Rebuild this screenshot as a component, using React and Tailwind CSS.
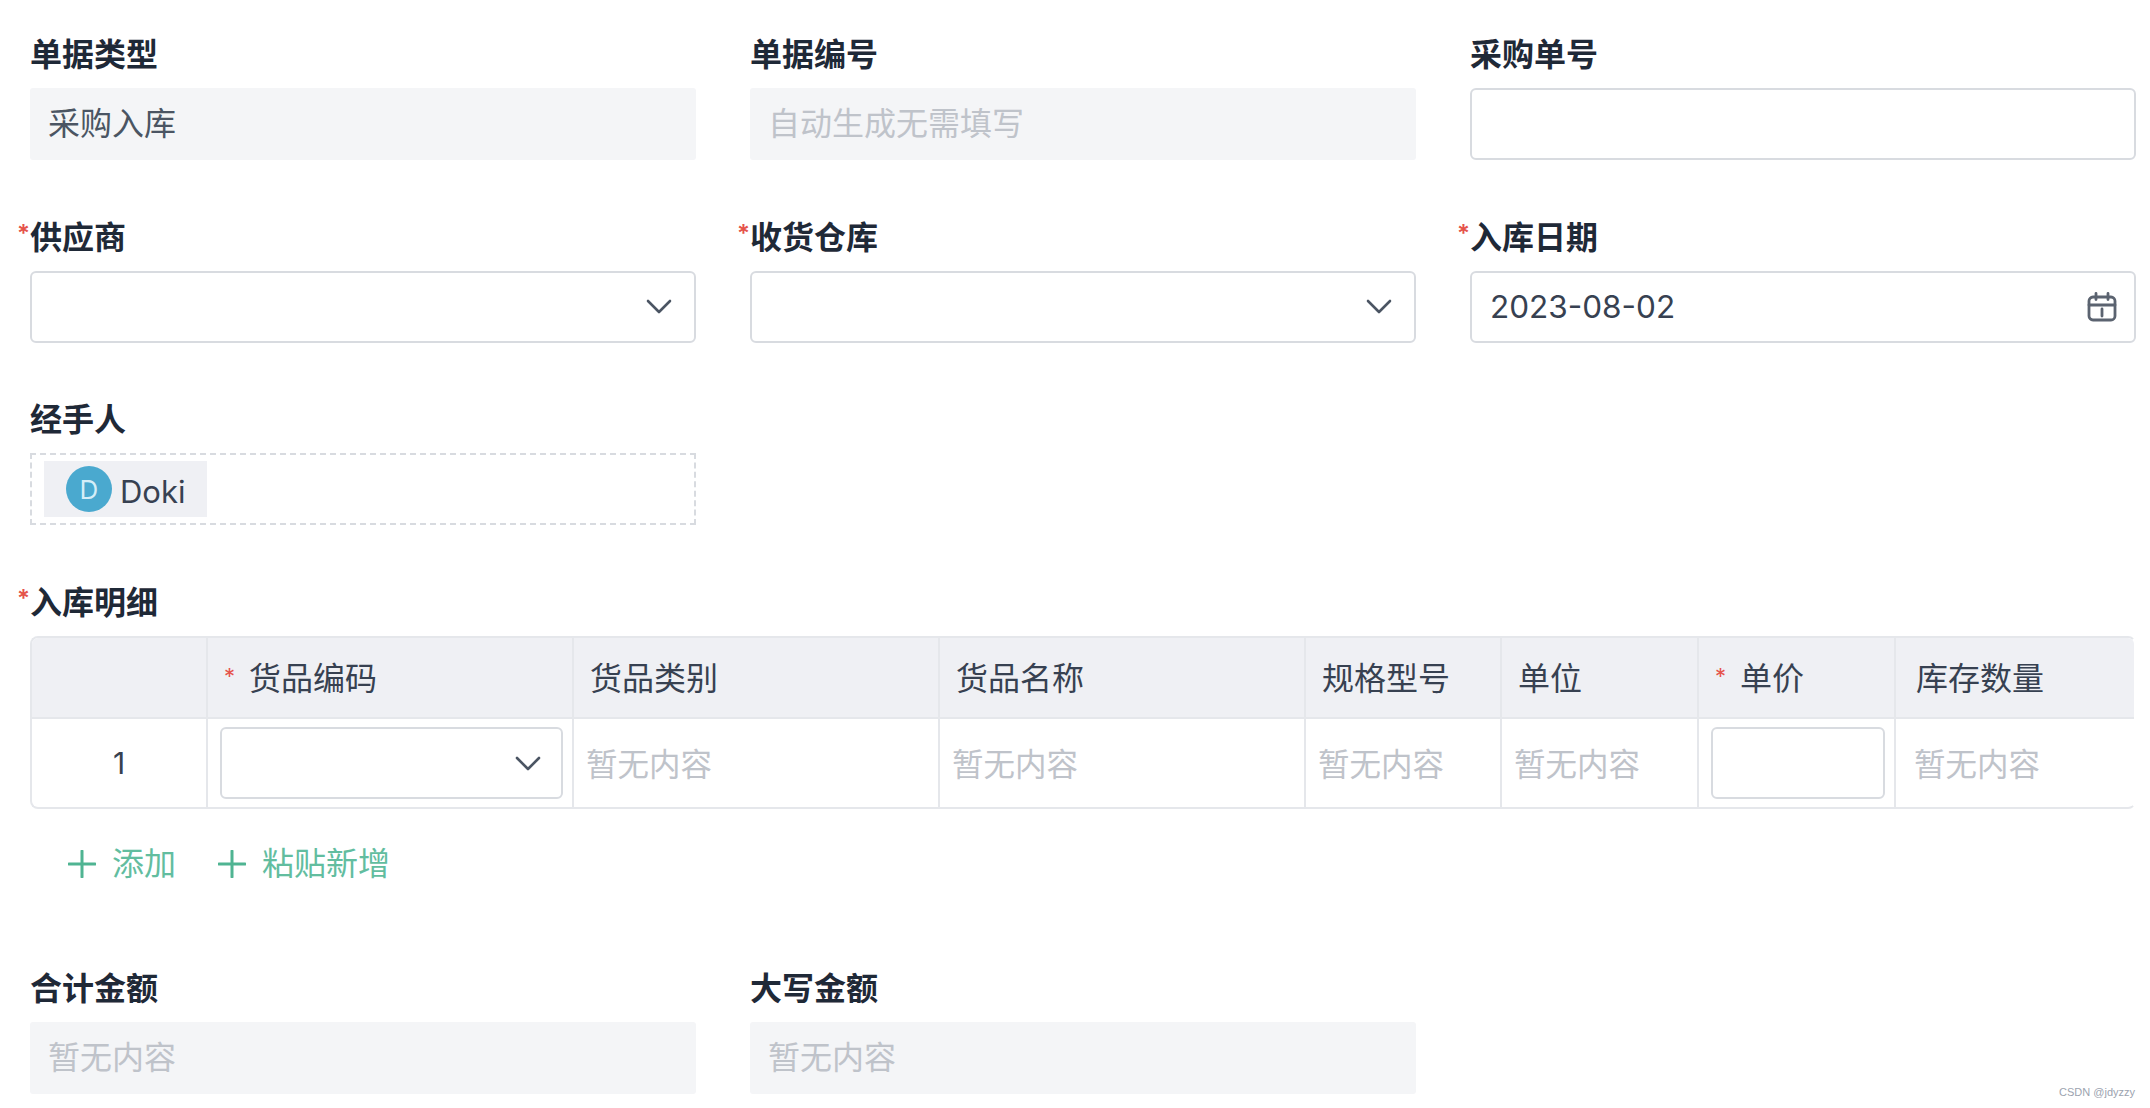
import React from 'react';

const font = 'font-["Inter","Noto_Sans_CJK_SC",sans-serif]';

function Chevron({ className }) {
  return (
    <svg className={className} viewBox="0 0 26 15" fill="none" stroke="#4b5563" strokeWidth="2.6" strokeLinecap="round" strokeLinejoin="round">
      <path d="M2 2l11 11L24 2" />
    </svg>
  );
}

function CalendarIcon() {
  return (
    <svg className="w-[30px] h-[30px]" viewBox="0 0 30 30" fill="none" stroke="#5b6370" strokeWidth="2.8" strokeLinecap="round">
      <rect x="2" y="5" width="26" height="23" rx="4" />
      <path d="M9 1.5v6M21 1.5v6M2 13h26M15 17v7" />
    </svg>
  );
}

function PlusIcon() {
  return (
    <svg className="w-[28px] h-[28px]" viewBox="0 0 28 28" fill="none" stroke="#4fb492" strokeWidth="3" strokeLinecap="round">
      <path d="M14 1v26M1 14h26" />
    </svg>
  );
}

function Label({ text, required }) {
  return (
    <div className="flex h-[44px] items-center mb-[11px] text-[32px] font-semibold text-[#1f2937]">
      {required && <span className="w-[13px] -ml-[13px] text-[24px] leading-none text-[#e5534b] -mt-[8px]">*</span>}
      {text}
    </div>
  );
}

function ReadOnly({ label, value, muted }) {
  return (
    <div>
      <Label text={label} />
      <div className={`h-[72px] rounded-[3px] bg-[#f4f5f7] px-[18px] flex items-center text-[32px] ${muted ? 'text-[#bfc3ca]' : 'text-[#4b5563]'}`}>
        {value}
      </div>
    </div>
  );
}

function Field({ label, required, children }) {
  return (
    <div>
      <Label text={label} required={required} />
      <div className="h-[72px] rounded-[6px] border-2 border-[#d8dbe0] bg-white pl-[18px] pr-[22px] flex items-center justify-between text-[31.5px] text-[#374151]">
        {children}
      </div>
    </div>
  );
}

const headers = [
  { text: '' },
  { text: '货品编码', required: true },
  { text: '货品类别' },
  { text: '货品名称' },
  { text: '规格型号' },
  { text: '单位' },
  { text: '单价', required: true },
  { text: '库存数量' },
];

const gridCols = 'grid grid-cols-[176px_366px_366px_366px_196px_197px_197px_1fr]';

function HeaderCell({ text, required, last }) {
  return (
    <div className={`flex items-center pt-[3px] text-[32px] text-[#374151] border-[#e5e7eb] ${last ? 'pl-[20px]' : 'pl-[16px] border-r-2'}`}>
      {required && <span className="w-[25px] text-[22px] leading-none text-[#e5534b] -mt-[6px]">*</span>}
      {text}
    </div>
  );
}

function EmptyCell({ last }) {
  return (
    <div className={`flex items-center pt-[3px] text-[31.5px] text-[#bfc3ca] border-[#e5e7eb] ${last ? 'pl-[18px]' : 'pl-[12px] border-r-2'}`}>
      暂无内容
    </div>
  );
}

function DetailTable() {
  return (
    <div className="rounded-[8px] border-2 border-[#e5e7eb] border-r-transparent overflow-hidden">
      <div className={`${gridCols} h-[81px] bg-[#eff0f4] border-b-2 border-[#e5e7eb]`}>
        {headers.map((h, i) => (
          <HeaderCell key={i} text={h.text} required={h.required} last={i === headers.length - 1} />
        ))}
      </div>
      <div className={`${gridCols} h-[88px]`}>
        <div className="flex items-center justify-center text-[30px] text-[#374151] border-r-2 border-[#e5e7eb]">1</div>
        <div className="flex items-center pl-[12px] pr-[9px] border-r-2 border-[#e5e7eb]">
          <div className="w-full h-[72px] rounded-[6px] border-2 border-[#d8dbe0] flex items-center justify-end pr-[20px]">
            <Chevron className="w-[26px] h-[15px]" />
          </div>
        </div>
        <EmptyCell />
        <EmptyCell />
        <EmptyCell />
        <EmptyCell />
        <div className="flex items-center pl-[12px] pr-[9px] border-r-2 border-[#e5e7eb]">
          <div className="w-full h-[72px] rounded-[6px] border-2 border-[#d8dbe0]" />
        </div>
        <EmptyCell last />
      </div>
    </div>
  );
}

export default function App() {
  return (
    <div className={`relative w-[2150px] h-[1108px] overflow-hidden bg-white pl-[30px] pr-[14px] pt-[33px] ${font}`}>
      <div className="grid grid-cols-3 gap-x-[54px] gap-y-[55.5px]">
        <ReadOnly label="单据类型" value="采购入库" />
        <ReadOnly label="单据编号" value="自动生成无需填写" muted />
        <Field label="采购单号" />

        <Field label="供应商" required>
          <span />
          <Chevron className="w-[26px] h-[15px]" />
        </Field>
        <Field label="收货仓库" required>
          <span />
          <Chevron className="w-[26px] h-[15px]" />
        </Field>
        <Field label="入库日期" required>
          <span>2023-08-02</span>
          <span className="-mr-[5px]"><CalendarIcon /></span>
        </Field>

        <div>
          <Label text="经手人" />
          <div className="h-[72px] border-2 border-dashed border-[#d8dbe0] flex items-center pl-[12px]">
            <div className="h-[56px] bg-[#eff0f4] flex items-center gap-[8px] px-[22px]">
              <div className="w-[46px] h-[46px] rounded-full bg-[#4aa9cf] text-[#d5eef8] text-[26px] flex items-center justify-center">D</div>
              <span className="text-[31px] text-[#374151] mt-[6px]">Doki</span>
            </div>
          </div>
        </div>
      </div>

      <div className="mt-[56px]">
        <Label text="入库明细" required />
        <DetailTable />
      </div>

      <div className="flex items-center mt-[39px] pl-[38px] h-[32px] text-[32px] text-[#62bd9f]">
        <PlusIcon />
        <span className="ml-[16px]">添加</span>
        <span className="ml-[42px]"><PlusIcon /></span>
        <span className="ml-[16px]">粘贴新增</span>
      </div>

      <div className="grid grid-cols-3 gap-x-[54px] mt-[87px]">
        <ReadOnly label="合计金额" value="暂无内容" muted />
        <ReadOnly label="大写金额" value="暂无内容" muted />
      </div>

      <div className="absolute right-[15px] top-[1087px] text-[11px] leading-none text-[#9ca3af] font-['Liberation_Sans',sans-serif]">
        CSDN @jdyzzy
      </div>
    </div>
  );
}
